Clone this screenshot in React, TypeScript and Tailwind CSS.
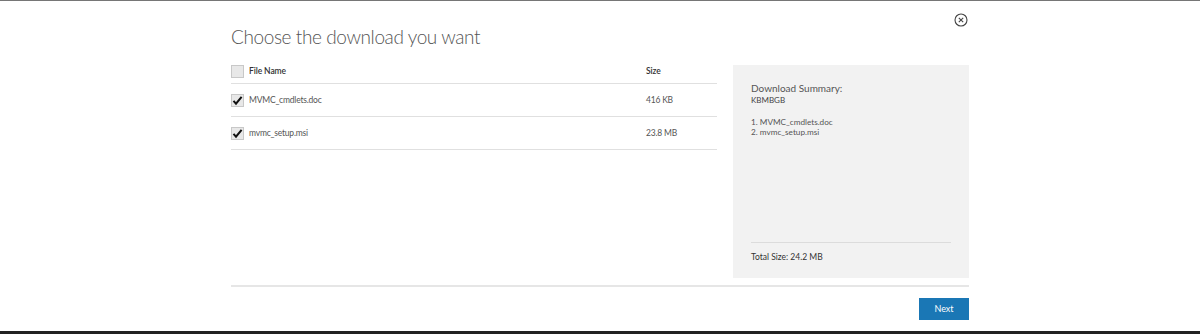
import React from "react";

const files = [
  { name: "MVMC_cmdlets.doc", size: "416 KB" },
  { name: "mvmc_setup.msi", size: "23.8 MB" },
];

const Box = ({ checked }: { checked?: boolean }) => (
  <span className="flex h-[13px] w-[13px] shrink-0 items-center justify-center border border-[#c8c8c8] bg-[#e8e8e8]">
    {checked && (
      <svg width="11" height="11" viewBox="0 0 11 11">
        <path d="M1.5 5.8 L4 8.6 L9.6 1.8" fill="none" stroke="#111" strokeWidth="2" />
      </svg>
    )}
  </span>
);

export default function App() {
  return (
    <div className="h-[334px] w-[1200px] overflow-hidden border-t border-[#767676] border-b-[3px] border-b-[#222] bg-white font-['Lato',sans-serif] text-[#333]">
      <div className="mx-auto flex w-[738px] flex-col">
        <div className="flex justify-end pt-[12px]">
          <svg width="14" height="14" viewBox="0 0 14 14" className="mr-[1px]">
            <circle cx="7" cy="7" r="6" fill="none" stroke="#444" strokeWidth="1.1" />
            <path d="M4.8 4.8 L9.2 9.2 M9.2 4.8 L4.8 9.2" stroke="#444" strokeWidth="1.1" />
          </svg>
        </div>
        <h1 className="-mt-[4px] text-[19px] font-light leading-[28px] tracking-[-0.4px] text-[#555]">
          Choose the download you want
        </h1>
        <div className="mt-[14px] flex h-[213px] gap-[16px]">
          <div className="w-[486px]">
            <div className="flex h-[19px] items-center border-b border-[#e0e0e0] pb-[5px] text-[8.5px] font-semibold tracking-[-0.1px] text-[#333]">
              <Box />
              <span className="ml-[5px] flex-1">File Name</span>
              <span className="w-[71px]">Size</span>
            </div>
            {files.map((f) => (
              <div
                key={f.name}
                className="flex h-[33px] items-center border-b border-[#e0e0e0] text-[8.5px] tracking-[-0.2px] text-[#555]"
              >
                <Box checked />
                <span className="ml-[5px] flex-1">{f.name}</span>
                <span className="w-[71px]">{f.size}</span>
              </div>
            ))}
          </div>
          <div className="flex flex-1 flex-col bg-[#f2f2f2] px-[18px] pt-[17px] pb-[14px]">
            <div className="text-[10px] leading-[13px] text-[#555]">Download Summary:</div>
            <div className="text-[8px] leading-[10px] text-[#444]">KBMBGB</div>
            <ol className="mt-[12px] text-[8.2px] leading-[10px] text-[#555]">
              {files.map((f, i) => (
                <li key={f.name}>
                  {i + 1}. {f.name}
                </li>
              ))}
            </ol>
            <div className="mt-auto border-t border-[#dcdcdc] pt-[8px] text-[8.5px] text-[#333]">
              Total Size: 24.2 MB
            </div>
          </div>
        </div>
        <div className="mt-[7px] h-[2px] bg-[#e6e6e6]" />
        <div className="mt-[11px] flex justify-end">
          <button className="h-[22px] w-[50px] bg-[#1a77b5] text-[9px] text-white">Next</button>
        </div>
      </div>
    </div>
  );
}
